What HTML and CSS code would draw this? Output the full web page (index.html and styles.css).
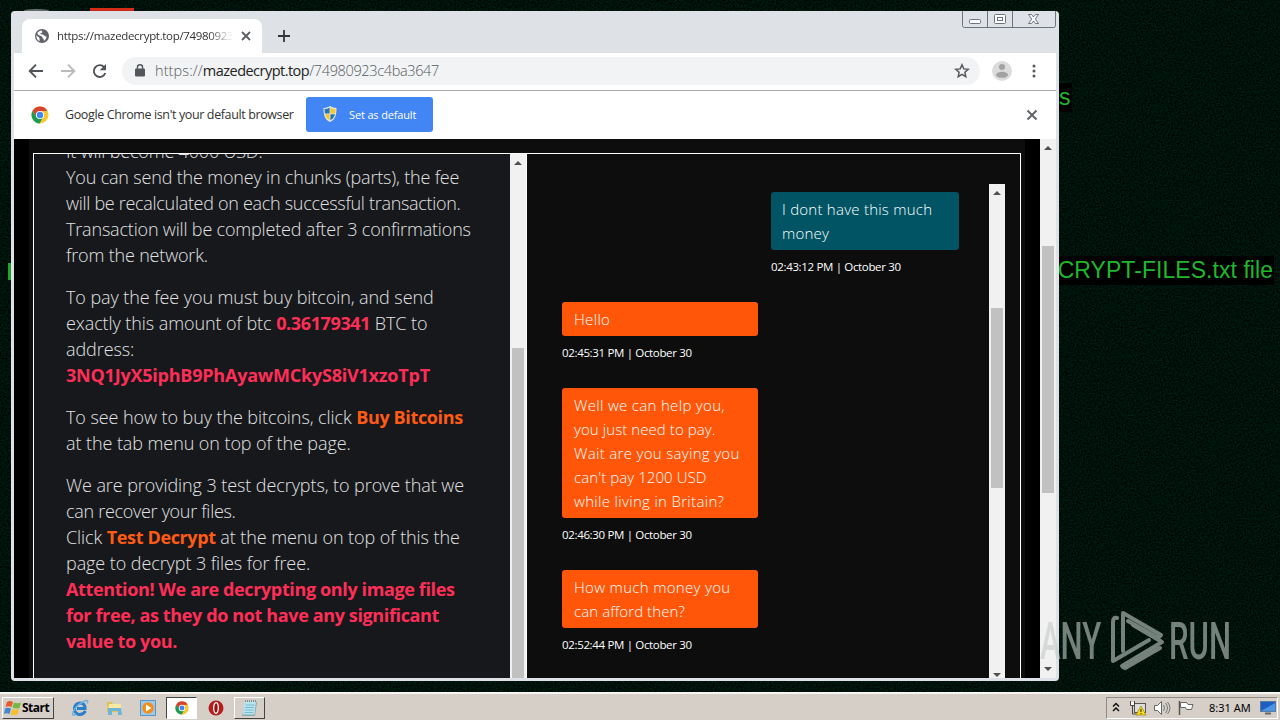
FILE: index.html
```html
<!DOCTYPE html>
<html lang="en">
<head>
    <meta charset="UTF-8">
    <meta name="viewport" content="width=device-width, initial-scale=1.0">
    <title>https://mazedecrypt.top/74980923c4ba3647</title>
    <link rel="stylesheet" href="styles.css">
</head>
<body>
    <svg width="0" height="0" class="defs">
        <symbol id="chrome" viewBox="0 0 18 18">
            <circle cx="9" cy="9" r="8.5" fill="#fbc72e"/>
            <path d="M1.6 4.8A8.5 8.5 0 0 1 16.4 4.8L9 5.2 5.8 11Z" fill="#d94133"/>
            <path d="M1.6 4.8A8.5 8.5 0 0 0 8.6 17.5L12.2 11 9 13 5.7 11Z" fill="#1c9b55"/>
            <circle cx="9" cy="9" r="4.1" fill="#fff"/>
            <circle cx="9" cy="9" r="3.2" fill="#4285f4"/>
        </symbol>
    </svg>
    <div class="desktop">
        <svg class="noise" width="1280" height="720">
            <filter id="grain" color-interpolation-filters="sRGB"><feTurbulence type="fractalNoise" baseFrequency="0.6" numOctaves="2" seed="4"/><feColorMatrix values="0 0 0 0 0  0 .22 0 0 -.04  0 .12 0 0 -.02  0 0 0 0 1"/></filter>
            <rect width="1280" height="720" filter="url(#grain)"/>
        </svg>
        <div class="gray-icon"></div>
        <div class="red-icon"></div>
        <div class="wall-text wall-first">s</div>
        <div class="wall-text wall-second">CRYPT-FILES.txt file</div>
        <div class="wall-edge"></div>

        <div class="window">
            <div class="tabstrip">
                <div class="tab">
                    <svg width="14" height="14" viewBox="0 0 14 14"><circle cx="7" cy="7" r="7" fill="#5f6368"/><path d="M1.5 6.2L4.5 9v3.3A6 6 0 0 1 1.5 6.2ZM7 1.4c-.8 1 .9 1.2.2 2-.6.7-1.8.2-1.9 1.4 0 1 2.8.2 3.3 1.3.4 1 1.6 1.2 2.8 1.2.4 1.8-1 3.8-2.6 4.6.5-1.5-.4-2-.9-2.4-.7-.7-.2-1.5-1-2L3 5.800 2.400 4C3.400 2.300 5 1.300 7 1.400Z" fill="#fff"/></svg>
                    <span class="tab-title">https://mazedecrypt.top/74980923c</span>
                    <svg class="tab-close" width="10" height="10" viewBox="0 0 10 10"><path d="M1 1l8 8M9 1L1 9" stroke="#5a5d62" stroke-width="1.8"/></svg>
                </div>
                <svg class="new-tab" width="12" height="12" viewBox="0 0 12 12"><path d="M6 0v12M0 6h12" stroke="#33363a" stroke-width="1.8"/></svg>
                <svg class="controls" width="94" height="18" viewBox="0 0 94 18" fill="none" stroke="#6d7480">
                    <path d="M.5 0v14.500q0 2 2 2h89q2 0 2-2V0M25.500 0v16.500M50.500 0v16.500"/>
                    <rect x="7.500" y="8.500" width="11" height="4" rx="1" fill="#fff"/>
                    <rect x="32.500" y="3.500" width="11" height="9" rx="1" fill="#fff"/>
                    <rect x="35.500" y="6.500" width="5" height="3"/>
                    <path d="M66.500 3.500h3l2 2.500 2-2.500h3l-3.200 4.500 3.200 4.500h-3l-2-2.500-2 2.500h-3l3.200-4.500Z" fill="#fff"/>
                </svg>
            </div>
            <div class="toolbar">
                <svg class="nav" width="90" height="20" viewBox="0 0 90 20" fill="none" stroke-width="1.9">
                    <path d="M16 10H3M9 3.700L2.700 10 9 16.300" stroke="#505357"/>
                    <path d="M34 10h13M41 3.700l6.300 6.300L41 16.300" stroke="#b9bbbd"/>
                    <path d="M77.200 6.200A5.900 5.900 0 1 0 78.300 12" stroke="#505357"/>
                    <path d="M79 3v6.300h-6.300Z" fill="#505357"/>
                </svg>
                <div class="address">
                    <svg width="10" height="13" viewBox="0 0 10 13"><rect x="0" y="4.500" width="10" height="8" rx="1" fill="#54575b"/><path d="M2.400 5V3.400a2.600 2.600 0 0 1 5.200 0V5" fill="none" stroke="#54575b" stroke-width="1.400"/></svg>
                    <span class="url"><span>https://</span><b>mazedecrypt.top</b>/74980923c4ba3647</span>
                    <svg width="16" height="16" viewBox="0 0 16 16"><path d="M8 1.800l1.800 4.100 4.400.4-3.300 3 .9 4.400L8 11.400l-3.800 2.300.9-4.400-3.300-3 4.400-.4Z" fill="none" stroke="#55585c" stroke-width="1.500"/></svg>
                </div>
                <svg class="avatar" width="20" height="20" viewBox="0 0 20 20"><circle cx="10" cy="10" r="10" fill="#dcdcdc"/><circle cx="10" cy="6" r="3" fill="#a2a2a2"/><ellipse cx="10" cy="13.800" rx="6" ry="3" fill="#a2a2a2"/></svg>
                <svg class="dots" width="4" height="14" viewBox="0 0 4 14" fill="#55585c"><circle cx="2" cy="2" r="1.500"/><circle cx="2" cy="7" r="1.500"/><circle cx="2" cy="12" r="1.500"/></svg>
            </div>
            <div class="infobar">
                <svg width="18" height="18"><use href="#chrome"/></svg>
                <span class="info-text">Google Chrome isn't your default browser</span>
                <div class="default-btn">
                    <svg width="14" height="16" viewBox="0 0 14 16"><path d="M7 0Q10 2 13.500 2C13.500 10 12 13.500 7 16 2 13.500.500 10 .500 2 4 2 7 0 7 0Z" fill="#e8e8dc"/><path d="M6.600 1.500V7.500H1.800Q1.500 5 1.600 3 4.500 3 6.600 1.500ZM7.400 8.300h4.700Q11 12.500 7.400 14.500Z" fill="#2476b8"/><path d="M7.400 1.500Q9.500 3 12.400 3q.1 2-.2 4.500H7.400ZM1.900 8.300h4.700v6.200Q3 12.500 1.900 8.300Z" fill="#f6c62d"/></svg>
                    <span>Set as default</span>
                </div>
                <svg class="info-close" width="12" height="12" viewBox="0 0 12 12"><path d="M1.500 1.500l9 9M10.500 1.500l-9 9" stroke="#606366" stroke-width="1.900"/></svg>
            </div>
            <div class="viewport">
                <div class="page">
                    <div class="frame">
                        <div class="note">
                            <div class="note-body">
                                <p class="snug">It will become 4000 USD.<br>You can send the money in chunks (parts), the fee<br><span class="narrow">will be recalculated on each successful transaction.</span><br>Transaction will be completed after 3 confirmations<br>from the network.</p>
                                <p>To pay the fee you must buy bitcoin, and send<br>exactly this amount of btc <b>0.36179341</b> BTC to<br>address:<br><b class="wallet">3NQ1JyX5iphB9PhAyawMCkyS8iV1xzoTpT</b></p>
                                <p>To see how to buy the bitcoins, click <b class="orange">Buy Bitcoins</b><br>at the tab menu on top of the page.</p>
                                <p>We are providing 3 test decrypts, to prove that we<br><span class="narrow">can recover your files.</span><br>Click <b class="orange">Test Decrypt</b> at the menu on top of this the<br>page to decrypt 3 files for free.<br><b>Attention! We are decrypting only image files<br>for free, as they do not have any significant<br>value to you.</b></p>
                            </div>
                            <div class="scroll note-scroll"><i class="up"></i><div class="thumb"></div></div>
                        </div>
                        <div class="chat">
                            <div class="messages">
                                <div class="msg mine"><div class="bubble">I dont have this much<br>money</div><time>02:43:12 PM | October 30</time></div>
                                <div class="msg"><div class="bubble">Hello</div><time>02:45:31 PM | October 30</time></div>
                                <div class="msg"><div class="bubble">Well we can help you,<br><span class="tight">you just need to pay.</span><br>Wait are you saying you<br><span class="tight">can't pay 1200 USD</span><br>while living in Britain?</div><time>02:46:30 PM | October 30</time></div>
                                <div class="msg"><div class="bubble">How much money you<br><span class="tight">can afford then?</span></div><time>02:52:44 PM | October 30</time></div>
                            </div>
                            <div class="scroll chat-scroll"><i class="up"></i><div class="thumb"></div><i class="down"></i></div>
                        </div>
                    </div>
                </div>
                <div class="scroll page-scroll"><i class="up"></i><div class="thumb"></div><i class="down"></i></div>
            </div>
        </div>

        <svg class="watermark" width="240" height="66" viewBox="0 0 240 66">
            <g fill="#c4ccc8">
                <text transform="translate(0 50) scale(.61 1)">ANY</text>
                <text transform="translate(129 50) scale(.61 1)">RUN</text>
            </g>
            <g fill="none" stroke="#c4ccc8" stroke-width="4" stroke-linejoin="round" stroke-linecap="round">
                <path d="M83 42V4L121 26 118 29 88 12"/>
                <path d="M77 9q-4-1-4 4v39L109 31"/>
                <path d="M93 16L122 33 82 57q2 3 5 1L120 39"/>
            </g>
        </svg>

        <div class="taskbar">
            <div class="start">
                <svg width="18" height="16" viewBox="0 0 18 16"><path d="M3 2q3-2 6 0L7.500 7Q5 5.500 1.500 7Z" fill="#e85a28"/><path d="M10 2.500q3 1.500 7 0L15.500 8Q12 9 8.500 7.500Z" fill="#76b83f"/><path d="M1 8.500q3-1.500 6 0L5.500 14Q3 12.500 0 14Z" fill="#4387d0"/><path d="M8 9q3 1.500 7 0L13.500 14.500Q10 16 6.500 14.300Z" fill="#f6bf2c"/></svg>
                <b>Start</b>
            </div>
            <div class="quick">
                <div class="task"><svg width="18" height="18" viewBox="0 0 18 18" fill="none"><path d="M14.500 12Q12 16 8 15.500 3.500 14.500 3.500 9.500 4 4.500 9 4q5 .2 5 5.500H6" stroke="#2a7fcb" stroke-width="3"/><path d="M5 15Q0 18 2 13 6 5 15 1.500q3-.5 1 3" stroke="#69b3dc" stroke-width="1.500"/></svg></div>
                <div class="task"><svg width="18" height="18" viewBox="0 0 18 18"><path d="M2 3h5l1 2h7v8H2Z" fill="#dfc253"/><path d="M4 5h12v6H3Z" fill="#f7e9a0"/><path d="M3 9h13l1 7h-4v-4H7v4H3Z" fill="#6fb4d8"/></svg></div>
                <div class="task"><svg width="16" height="16" viewBox="0 0 16 16"><rect x=".5" y=".5" width="15" height="15" fill="#9dc8ea" stroke="#5a94c8"/><circle cx="8" cy="8" r="5.800" fill="#f48d1c"/><path d="M6 4.500L11.500 8 6 11.500Z" fill="#fff"/></svg></div>
                <div class="task active"><svg width="14" height="14"><use href="#chrome"/></svg></div>
                <div class="task"><svg width="16" height="16" viewBox="0 0 16 16"><circle cx="8" cy="8" r="7.500" fill="#b71c1c"/><ellipse cx="8" cy="8" rx="2.300" ry="5.300" fill="#921010" stroke="#fff" stroke-width="1.300"/></svg></div>
                <div class="task raised"><svg width="18" height="18" viewBox="0 0 18 18"><path d="M4 3h12l-2 14H1Z" fill="#8aa8b0"/><path d="M3.500 2.500H15l-1.500 13H1.500Z" fill="#b9e4ef"/><path d="M4.500 6h9M4 8.500h9M3.700 11h9M3.500 13.500h9" stroke="#7cbad0"/><path d="M4 2h11" stroke="#7f8c90" stroke-dasharray="1 1" stroke-width="2"/></svg></div>
            </div>
            <div class="tray">
                <svg width="90" height="20" viewBox="0 0 90 20">
                    <path d="M3 8.500l3-3 3 3M3 13l3-3 3 3" fill="none" stroke="#111" stroke-width="1.500"/>
                    <rect x="24.500" y="5.500" width="11" height="9" fill="#ddd" stroke="#555"/>
                    <path d="M20.500 3v4.500h4V3M22.500 8v8h4" fill="none" stroke="#444"/><path d="M21 4h3v3h-3z" fill="#fff"/>
                    <path d="M31 8l5 9H26Z" fill="#f8dc17" stroke="#94820b" stroke-width=".7"/><path d="M31 11v3M31 15v1" stroke="#222"/>
                    <path d="M44.500 7.500h3l4-4v13l-4-4h-3Z" fill="#fff" stroke="#666"/><path d="M53.500 7q2 3 0 6M55.500 5q4 5 0 10M57.500 4q5 6 0 12" fill="none" stroke="#777"/>
                    <path d="M69.500 3v14" stroke="#555" stroke-width="1.500"/><path d="M70.500 4.500h6l1.500 2h5l-1.500 5h-5l-1-2h-5Z" fill="#fff" stroke="#666"/>
                </svg>
                <span class="clock">8:31 AM</span>
                <svg width="16" height="14" viewBox="0 0 16 14"><rect width="16" height="11" fill="#5a7ba0"/><rect x="1" y="1" width="14" height="9" fill="#1d5fc0"/><path d="M1 10L15 2v8Z" fill="#4c94e6"/><path d="M5 12.500h6" stroke="#666" stroke-width="2"/></svg>
            </div>
        </div>
    </div>
</body>
</html>
```
FILE: styles.css
```css
* {
    box-sizing: border-box;
}
body {
    margin: 0;
    font-family: "Open Sans", "Noto Sans", sans-serif;
    overflow: hidden;
}
svg {
    display: block;
    flex: none;
}
.defs {
    position: absolute;
}
.desktop {
    position: relative;
    width: 1280px;
    height: 720px;
    background: #00120b;
    overflow: hidden;
}
.noise {
    position: absolute;
}
.red-icon {
    position: absolute;
    left: 90px;
    top: 8px;
    width: 44px;
    height: 4px;
    background: #d52b16;
}
.gray-icon {
    position: absolute;
    left: 24px;
    top: 9px;
    width: 25px;
    height: 3px;
    background: #6c7471;
    border-radius: 50% 50% 0 0;
}
.wall-text {
    position: absolute;
    background: #000;
    color: #1fb82a;
    font: 23px/29px "Liberation Sans", Arial, sans-serif;
    white-space: nowrap;
}
.wall-first {
    left: 1054px;
    top: 83px;
    padding: 0 1px 0 5px;
}
.wall-second {
    right: 6px;
    top: 256px;
    padding-right: 1px;
    letter-spacing: 0.05px;
}
.wall-edge {
    position: absolute;
    left: 8px;
    top: 263px;
    width: 3px;
    height: 17px;
    background: #23a52b;
}

/* browser window */
.window {
    position: absolute;
    left: 11px;
    top: 11px;
    width: 1048px;
    height: 670px;
    padding: 0 3px 3px;
    background: #dee1e6;
    border-radius: 4px;
    display: flex;
    flex-direction: column;
    box-shadow: 0 0 1px #2b3935;
}
.tabstrip {
    display: flex;
    height: 42px;
    padding-left: 8px;
}
.tab {
    display: flex;
    align-items: center;
    align-self: flex-end;
    width: 240px;
    height: 34px;
    padding: 0 11px 0 13px;
    background: #fff;
    border-radius: 8px 8px 0 0;
}
.tab-title {
    flex: 1;
    margin: -2px 8px 0 8px;
    font-size: 11.5px;
    letter-spacing: -0.32px;
    color: #333;
    white-space: nowrap;
    overflow: hidden;
    -webkit-mask-image: linear-gradient(to right, #000 86%, transparent);
    mask-image: linear-gradient(to right, #000 86%, transparent);
}
.new-tab {
    margin: 19px 0 0 16px;
}
.controls {
    margin-left: auto;
}
.toolbar {
    display: flex;
    align-items: center;
    height: 38px;
    padding: 0 20px 2px 13px;
    background: #fff;
    border-bottom: 1px solid #aaa;
}
.address {
    display: flex;
    align-items: center;
    width: 858px;
    height: 28px;
    margin: 0 12px 0 5px;
    padding: 0 10px 0 13px;
    background: #f1f3f4;
    border-radius: 14px;
}
.url {
    flex: 1;
    margin-left: 10px;
    font-size: 14.5px;
    font-weight: 300;
    letter-spacing: -0.35px;
    color: #555a60;
}
.url span {
    letter-spacing: 0.1px;
}
.url b {
    font-weight: 400;
    letter-spacing: -0.52px;
    color: #222;
}
.dots {
    margin-left: auto;
}
.infobar {
    display: flex;
    align-items: center;
    height: 48px;
    padding: 0 18px 0 17px;
    background: #fff;
}
.info-text {
    width: 228px;
    margin: -2px 13px 0 16px;
    font-size: 12.5px;
    letter-spacing: -0.38px;
    color: #333;
    white-space: nowrap;
}
.default-btn {
    display: flex;
    align-items: center;
    gap: 12px;
    width: 127px;
    height: 35px;
    margin-top: -1px;
    padding: 0 0 1px 17px;
    background: #4285f4;
    border-radius: 3px;
    color: #fff;
    font-size: 11px;
    letter-spacing: -0.15px;
    white-space: nowrap;
}
.info-close {
    margin-left: auto;
}

/* page */
.viewport {
    display: flex;
    flex: 1;
    min-height: 0;
    background: #000;
}
.page {
    width: 996px;
    margin: 0 15px;
    padding: 14px 4px 0;
    background: #0d0d0d;
    overflow: hidden;
}
.frame {
    display: flex;
    height: 600px;
    border: 1px solid #fff;
}
.note {
    display: flex;
    width: 493px;
    height: 524px;
    border-right: 1px solid #fff;
    background: #16181c;
    overflow: hidden;
}
.note-body {
    flex: 1;
    margin-top: -16px;
    padding-left: 32px;
    font-size: 18px;
    font-weight: 300;
    line-height: 26px;
    letter-spacing: -0.08px;
    color: #e2e2e2;
    white-space: nowrap;
}
.note-body p {
    margin: 0 0 16px;
}
.note-body .snug {
    letter-spacing: -0.18px;
}
.note-body .narrow {
    letter-spacing: -0.3px;
}
.note-body b {
    font-weight: 700;
    letter-spacing: -0.37px;
    color: #ff2e57;
}
.note-body .wallet {
    letter-spacing: -0.22px;
}
.note-body .orange {
    color: #ff5b14;
}
.chat {
    display: flex;
    flex: 1;
    height: 524px;
    padding: 30px 15px 0 35px;
}
.messages {
    flex: 1;
    padding-top: 8px;
}
.msg {
    width: 196px;
    margin-bottom: 26px;
}
.mine {
    width: 188px;
    margin: 0 0 26px 209px;
}
.bubble {
    padding: 5px 0 5px 12px;
    background: #ff5609;
    border-radius: 3px;
    color: #fff;
    font-size: 15px;
    font-weight: 300;
    line-height: 24px;
    letter-spacing: 0.32px;
    white-space: nowrap;
}
.mine .bubble {
    padding-left: 11px;
    background: #005464;
    letter-spacing: 0.24px;
}
.bubble .tight {
    letter-spacing: 0.08px;
}
time {
    display: block;
    height: 26px;
    padding-top: 8px;
    color: #fff;
    font-size: 11.5px;
    line-height: 18px;
    letter-spacing: -0.34px;
    white-space: nowrap;
}

/* scrollbars */
.scroll {
    display: flex;
    flex-direction: column;
    flex: none;
    width: 16px;
    background: #f1f1f1;
}
.scroll i {
    width: 8px;
    height: 4px;
    margin: 7px 4px;
    background: #505050;
    clip-path: polygon(50% 0, 100% 100%, 0 100%);
}
.scroll .down {
    margin: auto 4px 1px;
    clip-path: polygon(0 0, 100% 0, 50% 100%);
}
.thumb {
    width: 12px;
    margin-left: 2px;
    background: #c1c1c1;
}
.note-scroll .thumb {
    margin-top: 176px;
    flex: 1;
}
.chat-scroll .thumb {
    margin-top: 106px;
    height: 180px;
}
.page-scroll .thumb {
    margin-top: 89px;
    height: 247px;
}
.page-scroll .down {
    margin-bottom: 7px;
}

.watermark {
    position: absolute;
    left: 1040px;
    top: 609px;
    opacity: 0.6;
    font: 500 51px Roboto, sans-serif;
}

/* taskbar */
.taskbar {
    position: absolute;
    left: 0;
    bottom: 0;
    display: flex;
    align-items: center;
    width: 1280px;
    height: 28px;
    padding: 1px 2px 0;
    background: #d6cfc7;
    border-top: 2px solid #f7f6f3;
}
.start {
    display: flex;
    align-items: center;
    width: 52px;
    height: 22px;
    padding-left: 1px;
    border: 1px solid #fff;
    border-right-color: #444;
    border-bottom-color: #444;
    font-size: 12px;
    letter-spacing: -0.5px;
}
.quick {
    display: flex;
    align-items: center;
    gap: 3px;
    margin-left: 10px;
}
.task {
    display: flex;
    align-items: center;
    justify-content: center;
    width: 31px;
    height: 22px;
}
.active {
    background: #fff;
    border: 1px solid #fff;
    border-top-color: #444;
    border-left-color: #444;
}
.raised {
    border: 1px solid #fff;
    border-right-color: #444;
    border-bottom-color: #444;
}
.tray {
    display: flex;
    align-items: center;
    width: 172px;
    height: 22px;
    margin-left: auto;
    padding-left: 3px;
    border: 1px solid #908a84;
    border-right-color: #fff;
    border-bottom-color: #fff;
}
.clock {
    width: 41px;
    margin: 0 10px 0 9px;
    font: 11px "Noto Sans", sans-serif;
    white-space: nowrap;
}
```
